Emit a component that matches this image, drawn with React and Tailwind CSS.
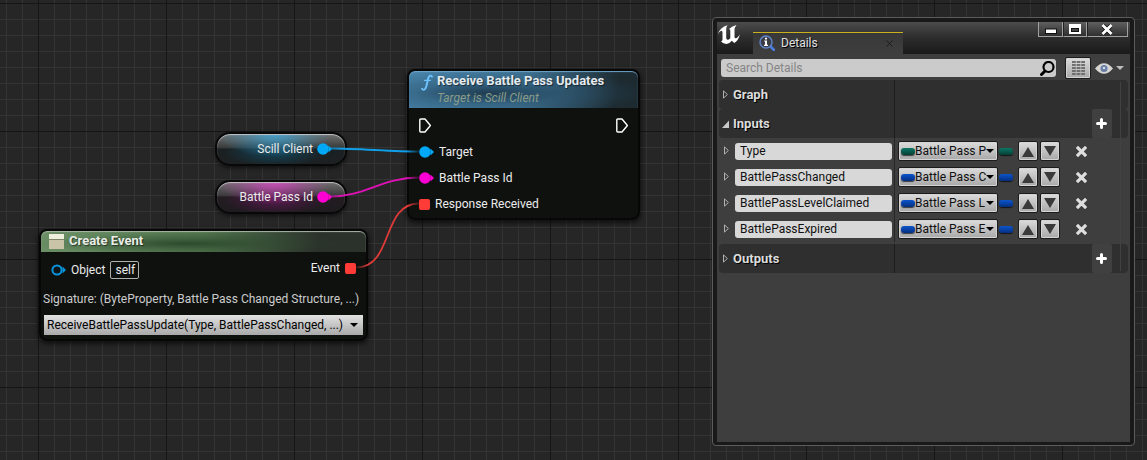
const shadowText = '[text-shadow:1px_1px_0_#000]';

function Circle({ color, hollow }) {
  return (
    <svg className="h-3 w-4 shrink-0" viewBox="0 0 16 12" aria-hidden="true">
      <path d="M11.5 2.6 L15 6 L11.5 9.4 Z" fill={color} />
      <circle cx="6" cy="6" r={hollow ? 4.6 : 5.8} fill={hollow ? '#0c1416' : color} stroke={hollow ? color : 'none'} strokeWidth="2" />
    </svg>
  );
}

function Square() {
  return <span className="size-[11px] shrink-0 rounded-xs bg-[#ff3b38]" />;
}

function Exec() {
  return (
    <svg className="h-[15px] w-3" viewBox="0 0 12 15" fill="none" stroke="#fff" strokeWidth="1.4" strokeLinejoin="round" aria-hidden="true">
      <path d="M1.7 1 H6 L11.4 7.5 L6 14 H1.7 Q0.8 14 0.8 13 V2 Q0.8 1 1.7 1 Z" />
    </svg>
  );
}

function Wires() {
  return (
    <svg className="pointer-events-none absolute left-0 top-0 h-[460px] w-[660px]" viewBox="0 0 660 460" fill="none" strokeWidth="1.8" aria-hidden="true">
      <defs>
        <linearGradient id="blue" gradientUnits="userSpaceOnUse" x1="328" x2="420" y1="0" y2="0">
          <stop offset="0" stopColor="#0f9fe8" stopOpacity=".5" /><stop offset=".15" stopColor="#0f9fe8" />
          <stop offset=".85" stopColor="#0f9fe8" /><stop offset="1" stopColor="#0f9fe8" stopOpacity=".1" />
        </linearGradient>
        <linearGradient id="pink" gradientUnits="userSpaceOnUse" x1="328" x2="420" y1="0" y2="0">
          <stop offset="0" stopColor="#e010b8" stopOpacity=".4" /><stop offset=".15" stopColor="#e010b8" />
          <stop offset=".85" stopColor="#e010b8" /><stop offset="1" stopColor="#e010b8" stopOpacity=".1" />
        </linearGradient>
        <linearGradient id="red" gradientUnits="userSpaceOnUse" x1="356" x2="420" y1="0" y2="0">
          <stop offset="0" stopColor="#e03a38" stopOpacity=".15" /><stop offset=".2" stopColor="#e03a38" />
          <stop offset=".8" stopColor="#e03a38" /><stop offset="1" stopColor="#e03a38" stopOpacity=".15" />
        </linearGradient>
      </defs>
      <path d="M331 148.5 C360 148.5 390 151.5 419 151.5" stroke="url(#blue)" />
      <path d="M331 196.5 C365 196.5 382 177.5 419 177.5" stroke="url(#pink)" />
      <path d="M356 267.5 C394 267.5 381 203.5 419 203.5" stroke="url(#red)" />
    </svg>
  );
}

const nodeBox = 'absolute rounded-lg border-2 border-[#060706] bg-[#0e100e]/95 shadow-[0_2px_5px_1px_rgba(0,0,0,0.6)]';

function ReceiveNode() {
  return (
    <section className={`${nodeBox} left-[407px] top-[69px] w-[233px]`}>
      <header className="flex h-[37px] gap-1 rounded-t-md bg-[radial-gradient(ellipse_at_35%_60%,#1f3d52_0%,#2b546f88_35%,transparent_75%),linear-gradient(100deg,#4a86ad_0%,#3f7495_50%,#1d2a30_90%)] pl-3 shadow-[inset_0_1px_1px_#6fa6c8]">
        <svg className="mt-[3px] h-[17px] w-3" viewBox="0 0 12 17" fill="none" stroke="#6ec3ff" strokeWidth="1.9" strokeLinecap="round" aria-hidden="true">
          <path d="M11 2.6 Q9.3 .4 7.7 3 Q7 4.4 6.2 8.5 Q5.2 14 3.8 15.2 Q2.2 16.4 1 14.8" />
          <path d="M3.6 6.4 H9.3" strokeWidth="1.4" />
        </svg>
        <div>
          <h2 className="pt-0.5 text-[13px]/[15px] font-bold text-[#e4eaee] [text-shadow:1px_1px_1px_#0008]">Receive Battle Pass Updates</h2>
          <p className="pt-[3px] text-[12px]/[15px] italic text-[#8a9c88]">Target is Scill Client</p>
        </div>
      </header>
      <div className="px-[10px] pb-px pt-1">
        <div className="flex h-[27px] items-center justify-between"><Exec /><Exec /></div>
        <div className="flex h-[26px] items-center gap-1"><Circle color="#00a8f6" />Target</div>
        <div className="flex h-[26px] items-center gap-1"><Circle color="#ff00d4" />Battle Pass Id</div>
        <div className="flex h-[26px] items-center gap-[5px]"><Square />Response Received</div>
      </div>
    </section>
  );
}

const pill = 'absolute left-[215px] flex h-[34px] w-[132px] items-center justify-end gap-1 rounded-[15px] border-2 border-[#080808] pr-3 shadow-[0_2px_4px_rgba(0,0,0,0.6),inset_0_1px_1px_#c4c4c4]';

function VariableNodes() {
  return (
    <>
      <div className={`${pill} top-[132px] bg-[radial-gradient(ellipse_45%_75%_at_45%_0%,#459fc9_0%,#459fc966_55%,transparent_100%),radial-gradient(ellipse_40%_50%_at_45%_60%,#12455a_0%,transparent_100%),linear-gradient(#707070_0%,#3a3c3c_45%,#1b2022_50%,#1c2021_100%)]`}>
        Scill Client<Circle color="#00a8f6" />
      </div>
      <div className={`${pill} top-[180px] bg-[radial-gradient(ellipse_45%_75%_at_45%_0%,#c94bb7_0%,#c94bb766_55%,transparent_100%),radial-gradient(ellipse_40%_50%_at_45%_60%,#54184c_0%,transparent_100%),linear-gradient(#707070_0%,#3c3a3c_45%,#231c22_50%,#1e1c1e_100%)]`}>
        Battle Pass Id<Circle color="#ff00d4" />
      </div>
    </>
  );
}

function Caret({ className }) {
  return <svg className={className} viewBox="0 0 8 4" fill="currentColor" aria-hidden="true"><path d="M0 0 H8 L4 4 Z" /></svg>;
}

function CreateEventNode() {
  return (
    <section className={`${nodeBox} left-[39px] top-[229px] w-[329px]`}>
      <header className="flex h-[21px] items-center gap-[5px] rounded-t-md bg-[radial-gradient(ellipse_at_45%_60%,#2c4a2c_0%,#2c4a2c66_30%,transparent_60%),linear-gradient(100deg,#6b9066_0%,#4f744c_50%,#2b322b_85%)] pb-0.5 pl-2 shadow-[inset_0_1px_1px_#a9b8a7]">
        <svg className="mt-0.5 h-[15px] w-[15px]" viewBox="0 0 15 15" aria-hidden="true">
          <rect width="15" height="5" fill="#eef0dd" /><rect y="5" width="15" height="1" fill="#7d8468" /><rect y="6" width="15" height="9" fill="#c9c4a7" />
        </svg>
        <h2 className="text-[13px]/[15px] font-bold text-[#e8ece6] [text-shadow:1px_1px_1px_#0008]">Create Event</h2>
      </header>
      <div className="flex justify-between px-[10px] pt-2">
        <div className="flex h-5 items-center gap-1">
          <Circle color="#0a94dc" hollow />
          <label htmlFor="object">Object</label>
          <input id="object" defaultValue="self" className="ml-px h-[18px] w-[29px] rounded-xs border border-[#b0b0b0] bg-transparent pl-1 text-[12px]" />
        </div>
        <div className="flex h-4 items-center gap-[5px]">Event<Square /></div>
      </div>
      <p className="mt-[10px] whitespace-nowrap pl-0.5 text-[12px]/[18px] text-[#cccccc]">Signature: (ByteProperty, Battle Pass Changed Structure, ...)</p>
      <div className="relative mx-[3px] mb-1 mt-[7px]">
        <select aria-label="Event function" className="block h-5 w-full appearance-none bg-linear-to-b from-[#e2e2e2] to-[#a9a9a9] pl-[3px] pr-3 text-[12px] text-black">
          <option>ReceiveBattlePassUpdate(Type, BattlePassChanged, ...)</option>
        </select>
        <Caret className="pointer-events-none absolute right-[5px] top-2 h-1 w-2 text-black" />
      </div>
    </section>
  );
}

function Pill({ color }) {
  const tone = color === 'green' ? 'from-[#0b7866] to-[#063f35]' : 'from-[#0c55cc] to-[#052f80]';
  return <span className={`block h-[7px] w-[14px] shrink-0 rounded-[3px] bg-linear-to-b shadow-[0_1px_1px_#000a] ${tone}`} />;
}

function Expander({ open }) {
  return open ? (
    <svg className="h-[9px] w-[7px] shrink-0" viewBox="0 0 7 9" aria-hidden="true"><path d="M7 1.5 V9 H0 Z" fill="#c8c8c8" /></svg>
  ) : (
    <svg className="h-[9px] w-[7px] shrink-0" viewBox="0 0 7 9" aria-hidden="true"><path d="M1.5 .9 L5.4 4.5 L1.5 8.1 Z" fill="none" stroke="#b0b0b0" /></svg>
  );
}

function Category({ title, open, add }) {
  return (
    <div className="flex h-[29px] rounded-sm bg-[#2f2f2f]">
      <button type="button" aria-expanded={!!open} className={`flex w-[175px] items-center gap-1 pl-[3px] text-[13px] font-bold text-[#dcdcdc] ${shadowText}`}>
        <Expander open={open} />{title}
      </button>
      <div className="flex flex-1 justify-end border-l border-[#1c1c1c] pr-4">
        {add && (
          <button type="button" aria-label={`Add to ${title}`} className="flex w-5 items-center justify-center rounded-xs bg-[#404040] pr-px">
            <svg className="size-[11px]" viewBox="0 0 11 11" stroke="#fff" strokeWidth="3" strokeLinecap="round" aria-hidden="true"><path d="M5.5 1.5 V9.5 M1.5 5.5 H9.5" /></svg>
          </button>
        )}
      </div>
    </div>
  );
}

const greyButton = 'border border-[#1b1b1b] bg-linear-to-b from-[#dcdcdc] to-[#a8a8a8] shadow-[inset_0_0_0_1px_#d4d4d4]';

function ParamRow({ name, type, color }) {
  return (
    <div className="flex h-[26px]">
      <div className="flex w-[175px] items-center gap-[5px] pl-1 pr-[2px]">
        <button type="button" aria-label={`Expand ${name}`} className="pb-0.5"><Expander /></button>
        <input aria-label="Parameter name" defaultValue={name} className="h-[17px] min-w-0 flex-1 rounded-[3px] bg-[#d8d8d8] px-[5px] text-[12px] text-[#101010]" />
      </div>
      <div className="flex flex-1 items-center border-l border-[#262626] pl-[3px]">
        <div className={`relative flex h-5 w-[100px] items-center rounded-xs pl-[2px] ${greyButton}`}>
          <Pill color={color} />
          <select aria-label={`${name} type`} className="h-full w-[71px] appearance-none overflow-hidden text-[12px] text-[#101010]">
            <option>{type}</option>
          </select>
          <Caret className="pointer-events-none absolute right-[3px] top-[7px] h-1 w-2 text-black" />
        </div>
        <div className="ml-px"><Pill color={color} /></div>
        <button type="button" aria-label="Move up" className={`ml-[5px] flex h-5 w-5 items-center justify-center rounded-xs ${greyButton}`}>
          <svg className="mt-px h-[10px] w-3" viewBox="0 0 12 10" fill="#3a3a3a" aria-hidden="true"><path d="M6 0 L12 10 H0 Z" /></svg>
        </button>
        <button type="button" aria-label="Move down" className={`ml-[2px] flex h-5 w-5 items-center justify-center rounded-xs ${greyButton}`}>
          <svg className="mb-px h-[10px] w-3" viewBox="0 0 12 10" fill="#3a3a3a" aria-hidden="true"><path d="M6 10 L12 0 H0 Z" /></svg>
        </button>
        <button type="button" aria-label={`Remove ${name}`} className="ml-4">
          <svg className="size-[11px]" viewBox="0 0 11 11" stroke="#dedede" strokeWidth="3.2" aria-hidden="true"><path d="M.9 .9 L10.1 10.1 M10.1 .9 L.9 10.1" /></svg>
        </button>
      </div>
    </div>
  );
}

function WindowButtons() {
  const b = 'flex h-[15px] items-center justify-center border border-t-0 border-[#a0a0a0] bg-linear-to-b from-[#606060] to-[#303030]';
  return (
    <div className="ml-auto mr-0.5 flex">
      <button type="button" aria-label="Minimize" className={`${b} w-[25px]`}>
        <svg className="h-[10px] w-3" viewBox="0 0 12 10" aria-hidden="true"><rect x=".5" y="5" width="11" height="4.5" fill="#fff" stroke="#111" /></svg>
      </button>
      <button type="button" aria-label="Maximize" className={`${b} w-6 border-l-[#222]`}>
        <svg className="h-[10px] w-3" viewBox="0 0 12 10" fill="none" aria-hidden="true"><path d="M0 0 H12 V10 H0 Z" fill="#fff" /><rect x="2.5" y="4.5" width="7" height="3" fill="#444" stroke="#111" /></svg>
      </button>
      <button type="button" aria-label="Close" className={`${b} w-[41px] border-l-[#222] pr-0.5`}>
        <svg className="h-[11px] w-3" viewBox="0 0 12 11" aria-hidden="true"><path d="M2 1.5 L10 9.5 M10 1.5 L2 9.5" stroke="#111" strokeWidth="4.4" /><path d="M1.5 1 L10.5 10 M10.5 1 L1.5 10" stroke="#fff" strokeWidth="2.8" /></svg>
      </button>
    </div>
  );
}

const params = [
  { name: 'Type', type: 'Battle Pass P', color: 'green' },
  { name: 'BattlePassChanged', type: 'Battle Pass C', color: 'blue' },
  { name: 'BattlePassLevelClaimed', type: 'Battle Pass L', color: 'blue' },
  { name: 'BattlePassExpired', type: 'Battle Pass E', color: 'blue' },
];

function DetailsWindow() {
  return (
    <aside className="absolute bottom-[14px] right-3 top-[17px] flex w-[423px] flex-col rounded-sm border border-[#5c5c5c] bg-[#191919] p-1 pb-[3px]">
      <div className="flex h-8 shrink-0 bg-linear-to-b from-[#4c4c4c] via-[#2c2c2c] via-50% to-[#1a1a1a]">
        <svg className="ml-px mt-[3px] h-5 w-[23px]" viewBox="0 0 23 20" fill="#fff" aria-label="Unreal" role="img">
          <path d="M0 9 Q2 2.500 9.500 .3 Q8.200 1.800 8.200 4 V13 Q8.500 15.300 10.300 14.700 Q11.700 14.300 12.300 13.300 V5.500 Q12.300 3.800 10.800 4.300 Q13.500 1.200 18.500 0 Q16.500 2.500 16.500 5 V12 Q16.700 13.800 18.300 13.200 Q20.300 12 21.800 9.500 Q20.500 15.500 16.300 18 L13.800 15.800 Q11.800 18.700 8.500 18.900 Q4.800 19 3 16.200 Q4.500 16.200 4.500 14.500 V7.500 Q4.500 5.300 3 5.800 Q1.300 6.500 0 9 Z" />
        </svg>
        <div className="ml-3 mt-[10px] flex h-[22px] w-[150px] items-center border-t border-[#c9b01d] bg-linear-to-b from-[#383838] to-[#3e3e3e] pb-px pl-[6px] pr-2">
          <svg className="size-4" viewBox="0 0 16 16" aria-hidden="true">
            <path d="M11 11 L15 15" stroke="#4c7de0" strokeWidth="2.600" strokeLinecap="round" />
            <circle cx="7" cy="7" r="6" fill="#3b3d44" stroke="#5f83c8" strokeWidth="1.500" />
            <path d="M6 2.800 H8 V4.500 H6 Z M5.200 5.500 H8 V9.800 H9 V11 H5 V9.800 H6 V6.600 H5.200 Z" fill="#fff" />
          </svg>
          <h2 className={`ml-[6px] text-[12px] text-[#e0e0e0] ${shadowText}`}>Details</h2>
          <button type="button" aria-label="Close tab" className="ml-auto pr-0.5">
            <svg className="size-[7px]" viewBox="0 0 7 7" stroke="#1c1c1c" aria-hidden="true"><path d="M.5 .5 L6.500 6.500 M6.500 .5 L.5 6.500" /></svg>
          </button>
        </div>
        <WindowButtons />
      </div>
      <div className="min-h-0 flex-1 bg-[#3e3e3e] px-0.5">
        <div className="flex h-[26px] items-center pl-0.5 pt-0.5">
          <div className="relative h-[18px] flex-1">
            <input aria-label="Search Details" placeholder="Search Details" className="block h-full w-full rounded-[3px] bg-[#cbcbcb] px-[5px] text-[12px] text-black placeholder:text-[#858585]" />
            <svg className="absolute right-px top-0.5 size-[15px]" viewBox="0 0 15 15" fill="none" stroke="#000" aria-hidden="true"><circle cx="8.500" cy="6" r="5" strokeWidth="2.200" /><path d="M5 10 L1.500 13.500" strokeWidth="3" strokeLinecap="round" /></svg>
          </div>
          <button type="button" aria-label="Property matrix" className={`ml-[9px] flex h-[22px] w-[26px] items-center justify-center rounded-xs ${greyButton}`}>
            <svg className="h-[14px] w-[13px]" viewBox="0 0 13 14" stroke="#707070" strokeWidth="2" aria-hidden="true">
              <path d="M0 1 H13 M0 4 H13 M0 7 H13 M0 10 H13 M0 13 H13" strokeDasharray="3.800 .8" />
            </svg>
          </button>
          <button type="button" aria-label="View options" className="ml-1 mr-1 flex items-center gap-[3px] text-[#bdbdbd]">
            <svg className="h-[11px] w-[18px]" viewBox="0 0 18 11" aria-hidden="true"><path d="M0 5.500 Q9 -5 18 5.500 Q9 16 0 5.500 Z" fill="#d8d6d2" /><circle cx="9" cy="5.500" r="3.500" fill="#667da6" /><circle cx="9" cy="5" r="1.300" fill="#d3d8e0" /></svg>
            <Caret className="h-1 w-2" />
          </button>
        </div>
        <div className="relative">
          <Category title="Graph" />
          <Category title="Inputs" open add />
          {params.map((p) => <ParamRow key={p.name} {...p} />)}
          <div className="h-0.5" />
          <Category title="Outputs" add />
          <div className="pointer-events-none absolute inset-y-0.5 right-[7px] w-px bg-[#424242]" />
        </div>
      </div>
    </aside>
  );
}

const grid = 'bg-[#262626] bg-[linear-gradient(90deg,#161616_1px,transparent_1px),linear-gradient(#161616_1px,transparent_1px),linear-gradient(90deg,#343434_1px,transparent_1px),linear-gradient(#343434_1px,transparent_1px)] bg-size-[128px_128px,128px_128px,16px_16px,16px_16px] bg-position-[38px_3px,38px_3px,6px_3px,6px_3px]';

export default function App() {
  return (
    <main className={`relative min-h-screen overflow-hidden font-[Roboto,sans-serif] text-[12px] text-[#ececec] ${grid}`}>
      <VariableNodes />
      <ReceiveNode />
      <CreateEventNode />
      <Wires />
      <DetailsWindow />
    </main>
  );
}
